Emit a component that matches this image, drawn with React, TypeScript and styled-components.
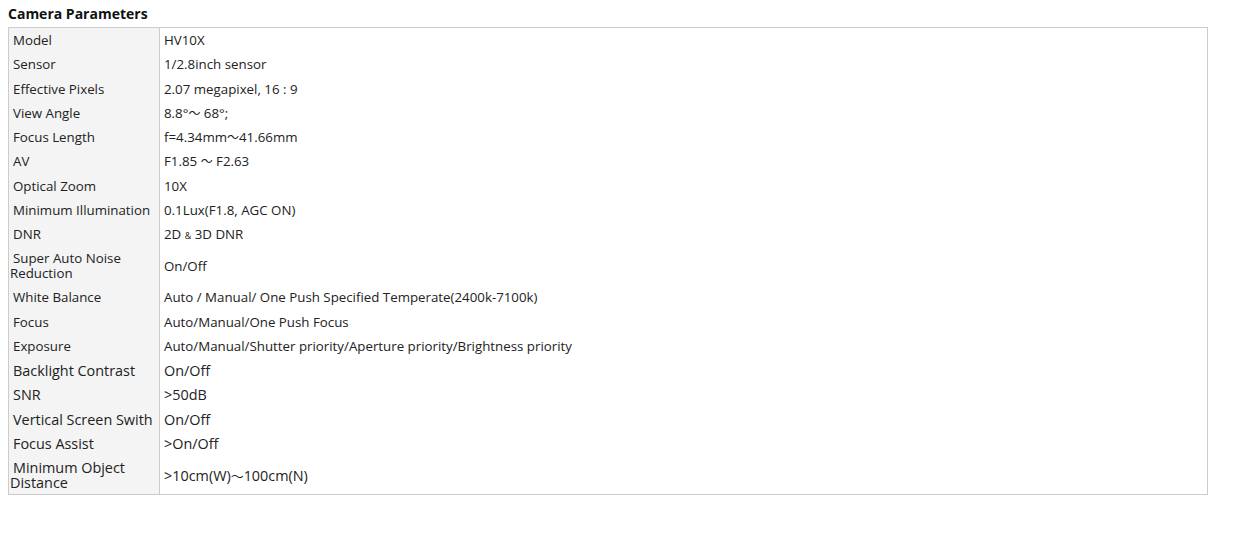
import React from "react";
import styled, { createGlobalStyle } from "styled-components";

const Global = createGlobalStyle`
  html, body { margin: 0; padding: 0; background: #fff; }
  body { font-family: "Open Sans", "Noto Sans", "Noto Sans CJK SC", sans-serif; color: #222; }
`;

const Page = styled.div`
  padding: 6px 8px;
`;

const Title = styled.h3`
  margin: 0 0 5px 0;
  font-size: 14px;
  line-height: 16px;
  font-weight: 700;
  color: #111;
`;

const Table = styled.table`
  width: 1200px;
  border-collapse: collapse;
  border: 1px solid #cccccc;
  table-layout: fixed;
`;

const Row = styled.tr<{ $big?: boolean }>`
  font-size: ${(p) => (p.$big ? "14.4px" : "13.3px")};
`;

const Label = styled.td`
  width: 149px;
  background: #f4f4f4;
  border-right: 1px solid #cccccc;
  padding: 5.15px 0 4.1px 1px;
  text-indent: 3px;
  line-height: 15px;
  vertical-align: middle;
`;

const Value = styled.td`
  padding: 5.15px 0 4.1px 4px;
  line-height: 15px;
  vertical-align: middle;
`;

const Amp = styled.span`
  font-size: 9px;
  line-height: 0;
`;

const Tilde = styled.span`
  font-family: "Noto Sans CJK SC", sans-serif;
  font-size: 0.9em;
  line-height: 0;
`;

type Item = { label: string; value: React.ReactNode; big?: boolean };

const items: Item[] = [
  { label: "Model", value: "HV10X" },
  { label: "Sensor", value: "1/2.8inch sensor" },
  { label: "Effective Pixels", value: "2.07 megapixel, 16 : 9" },
  { label: "View Angle", value: <>8.8°<Tilde>～</Tilde> 68°;</> },
  { label: "Focus Length", value: <>f=4.34mm<Tilde>～</Tilde>41.66mm</> },
  { label: "AV", value: <>F1.85 <Tilde>～</Tilde> F2.63</> },
  { label: "Optical Zoom", value: "10X" },
  { label: "Minimum Illumination", value: "0.1Lux(F1.8, AGC ON)" },
  { label: "DNR", value: <>2D <Amp>&amp;</Amp> 3D DNR</> },
  { label: "Super Auto Noise Reduction", value: "On/Off" },
  { label: "White Balance", value: "Auto / Manual/ One Push Specified Temperate(2400k-7100k)" },
  { label: "Focus", value: "Auto/Manual/One Push Focus" },
  { label: "Exposure", value: "Auto/Manual/Shutter priority/Aperture priority/Brightness priority" },
  { label: "Backlight Contrast", value: "On/Off", big: true },
  { label: "SNR", value: ">50dB", big: true },
  { label: "Vertical Screen Swith", value: "On/Off", big: true },
  { label: "Focus Assist", value: ">On/Off", big: true },
  { label: "Minimum Object Distance", value: <>&gt;10cm(W)<Tilde>～</Tilde>100cm(N)</>, big: true },
];

export default function App() {
  return (
    <>
      <Global />
      <Page>
        <Title>Camera Parameters</Title>
        <Table>
          <tbody>
            {items.map((it) => (
              <Row key={it.label} $big={it.big}>
                <Label>{it.label}</Label>
                <Value>{it.value}</Value>
              </Row>
            ))}
          </tbody>
        </Table>
      </Page>
    </>
  );
}
